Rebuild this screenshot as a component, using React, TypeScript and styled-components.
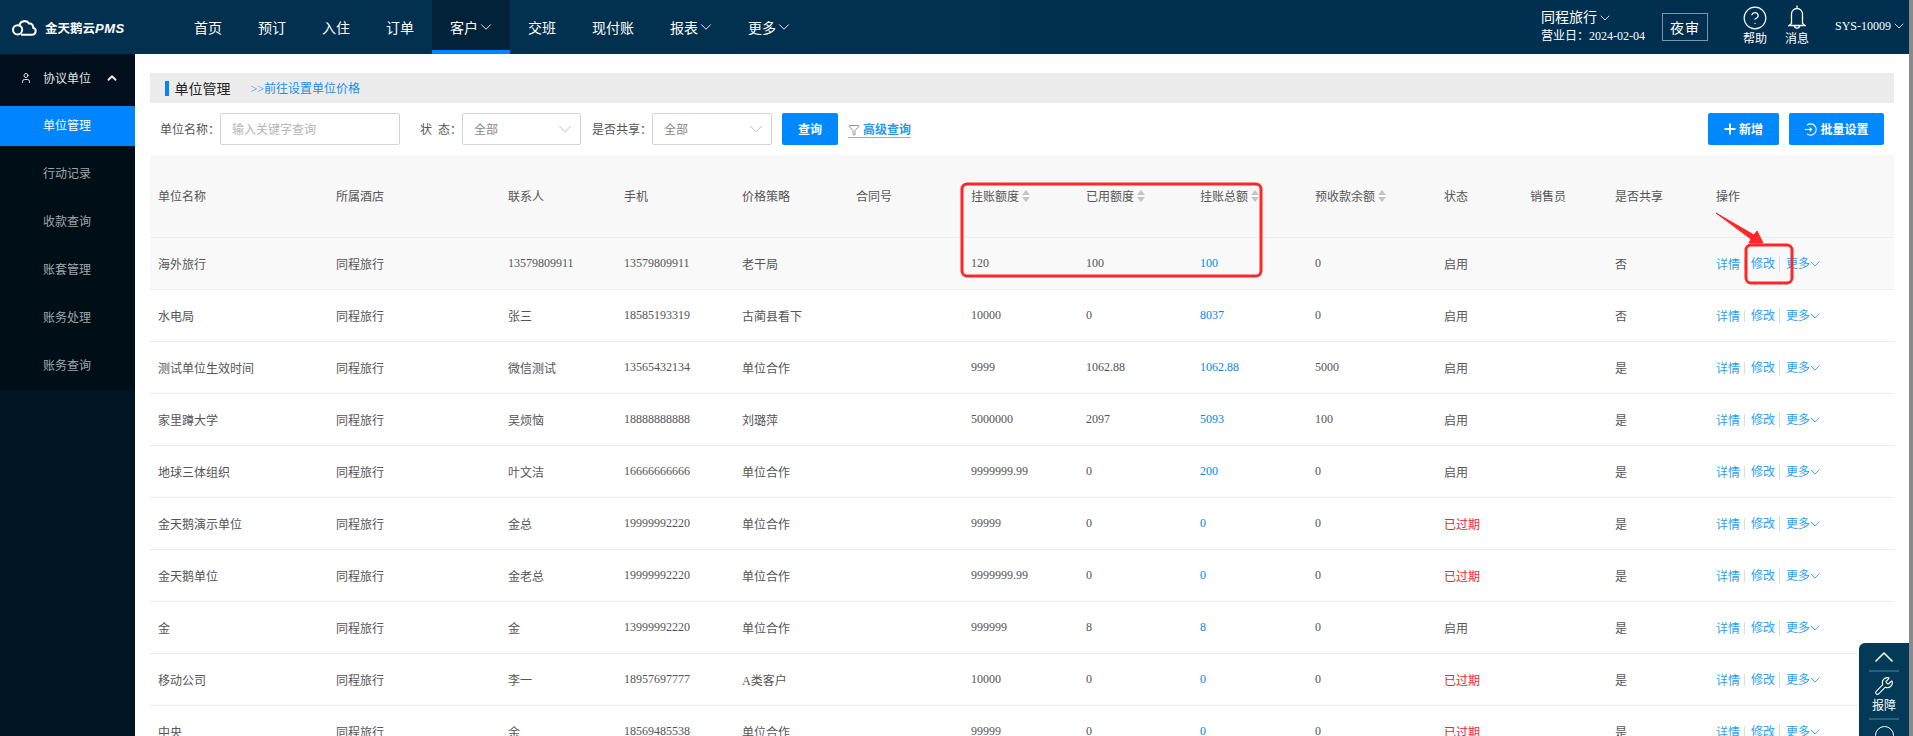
import * as React from 'react';
import styled, { createGlobalStyle } from 'styled-components';
import { ChevronDown, ChevronUp, User, Plus, Wrench, CircleHelp, Filter } from 'lucide-react';

const GlobalStyle = createGlobalStyle`
    html, body {
        margin: 0;
        height: 100%;
        overflow: hidden;
        background: #fff;
    }
    body, input, button {
        font-family: "Liberation Serif", "Noto Sans CJK SC", serif;
    }
`;

const Page = styled.div`
    position: relative;
    width: 1913px;
    height: 736px;
    overflow: hidden;
    display: flex;
    flex-direction: column;
    padding-right: 4px;
    box-sizing: border-box;
    &::after {
        content: '';
        position: absolute;
        top: 0;
        right: 0;
        bottom: 0;
        width: 4px;
        background: #8a8a8a;
    }
`;

const Header = styled.header`
    flex: none;
    height: 54px;
    display: flex;
    align-items: stretch;
    background: linear-gradient(90deg, #03304f 0%, #002f4f 100%);
    color: #fff;
`;

const Logo = styled.div`
    width: 176px;
    flex: none;
    display: flex;
    align-items: center;
    padding-left: 12px;
    box-sizing: border-box;
    gap: 8px;
    font-size: 12.5px;
    font-family: "Noto Sans CJK SC", sans-serif;
    font-weight: 700;
    svg {
        width: 25px;
        height: 17px;
    }
    em {
        font-family: "Liberation Sans", sans-serif;
        font-size: 13px;
        letter-spacing: 0.5px;
    }
`;

const NavItem = styled.div<{ $active?: boolean }>`
    display: flex;
    align-items: center;
    padding: 0 18px;
    font-size: 14px;
    box-sizing: border-box;
    background: ${p => (p.$active ? '#012238' : 'transparent')};
    border-bottom: 4px solid ${p => (p.$active ? '#0084ff' : 'transparent')};
    border-top: 4px solid transparent;
    svg {
        width: 18px;
        height: 18px;
        margin: 0 -3px 0 -1px;
        stroke-width: 1.2;
    }
`;

const Tools = styled.div`
    margin-left: auto;
    display: flex;
    align-items: center;
`;

const Shop = styled.div`
    width: 121px;
    font-size: 12px;
    line-height: 19px;
    div:first-child {
        font-size: 14px;
        display: flex;
        align-items: center;
    }
    svg {
        width: 16px;
        height: 16px;
        stroke-width: 1.2;
    }
`;

const Audit = styled.div`
    width: 46px;
    height: 28px;
    box-sizing: border-box;
    border: 1px solid #7c97a8;
    display: flex;
    align-items: center;
    justify-content: center;
    font-size: 14px;
    margin-right: 35px;
    letter-spacing: 1px;
`;

const IconLink = styled.div<{ $gap: number }>`
    width: 24px;
    height: 54px;
    margin-right: ${p => p.$gap}px;
    font-size: 12px;
    display: flex;
    flex-direction: column;
    align-items: center;
    padding-top: 5px;
    box-sizing: border-box;
    white-space: nowrap;
    line-height: 14px;
`;

const HelpIcon = styled(CircleHelp)`
    width: 26px;
    height: 26px;
    flex: none;
    stroke-width: 1.1;
    margin-bottom: 1px;
`;

const BellIcon = styled.svg`
    width: 18px;
    height: 24px;
    flex: none;
    margin-bottom: 3px;
`;

const UserName = styled.div`
    display: flex;
    align-items: center;
    font-size: 12px;
    padding: 0 2px 2px 0;
    svg {
        width: 16px;
        height: 16px;
        stroke-width: 1.2;
    }
`;

const Body = styled.div`
    flex: 1;
    display: flex;
    min-height: 0;
`;

const Sidebar = styled.aside`
    width: 135px;
    flex: none;
    background: #001423;
    font-size: 12px;
`;

const SideMenu = styled.nav`
    height: 336px;
    background: #000e17;
`;

const SideGroup = styled.div`
    height: 48px;
    margin-bottom: 4px;
    box-sizing: border-box;
    background: #010f1c;
    display: flex;
    align-items: center;
    padding: 0 16px 0 20px;
    color: #e2e5e7;
`;

const GroupIcon = styled(User)`
    width: 12px;
    height: 12px;
    margin-right: 11px;
`;

const GroupChevron = styled(ChevronUp)`
    width: 14px;
    height: 14px;
    margin-left: auto;
    stroke-width: 3.5;
`;

const SideItem = styled.div<{ $active?: boolean }>`
    height: 40px;
    margin-bottom: 8px;
    padding-left: 43px;
    line-height: 40px;
    background: ${p => (p.$active ? '#0084ff' : 'transparent')};
    color: ${p => (p.$active ? '#fff' : '#a0a6aa')};
`;

const Main = styled.main`
    flex: 1;
    min-width: 0;
    padding: 19px 15px 0 15px;
    display: flex;
    flex-direction: column;
`;

const TitleBar = styled.div`
    flex: none;
    height: 30px;
    background: #ececec;
    display: flex;
    align-items: center;
    padding-left: 15px;
    &::before {
        content: '';
        width: 4px;
        height: 15px;
        background: #0084ff;
        margin-right: 5.5px;
    }
`;

const Title = styled.span`
    font-size: 14px;
    color: #222;
    margin-right: 20px;
`;

const TitleLink = styled.a`
    font-size: 12px;
    color: #1a8cf0;
`;

const Filters = styled.div`
    flex: none;
    height: 52px;
    display: flex;
    align-items: center;
    padding-left: 10px;
    padding-right: 10px;
    font-size: 12px;
    color: #555;
`;

const FieldLabel = styled.span<{ $width: number }>`
    width: ${p => p.$width}px;
    flex: none;
`;

const TextBox = styled.div<{ $width: number; $gap: number }>`
    width: ${p => p.$width}px;
    margin-right: ${p => p.$gap}px;
    height: 32px;
    box-sizing: border-box;
    flex: none;
    border: 1px solid #d4d4d4;
    border-radius: 2px;
    display: flex;
    align-items: center;
    justify-content: space-between;
    padding: 0 4px 0 11px;
    color: #888;
    svg {
        width: 22px;
        height: 22px;
        stroke-width: 1;
        color: #bbb;
    }
`;

const Placeholder = styled.span`
    color: #b5b5b5;
`;

const Button = styled.button<{ $width: number }>`
    width: ${p => p.$width}px;
    height: 32px;
    flex: none;
    border: 0;
    border-radius: 2px;
    background: #0088ff;
    color: #fff;
    font-size: 12px;
    font-weight: 700;
    display: flex;
    align-items: center;
    justify-content: center;
    padding: 0;
`;

const PlusIcon = styled(Plus)`
    width: 16px;
    height: 16px;
    margin: 0 1px 0 -2px;
    stroke-width: 3;
`;

const BatchIcon = styled.svg`
    width: 13px;
    height: 13px;
    margin-right: 3px;
`;

const Advanced = styled.a`
    margin-left: 10px;
    padding-top: 2px;
    display: flex;
    align-items: center;
    gap: 3px;
    color: #2a9ae8;
    font-weight: 700;
    border-bottom: 1px solid #aaa;
    line-height: 14px;
    svg {
        width: 12px;
        height: 12px;
        color: #666;
        stroke-width: 1.4;
    }
`;

const Actions = styled.div`
    margin-left: auto;
    display: flex;
    gap: 10px;
`;

const Table = styled.div`
    flex: none;
    font-size: 12px;
    color: #555;
`;

const Row = styled.div<{ $head?: boolean; $hover?: boolean }>`
    display: grid;
    grid-template-columns: 178px 172px 116px 118px 114px 115px 115px 114px 115px 129px 86px 85px 101px 1fr;
    align-items: center;
    height: ${p => (p.$head ? 83 : 52)}px;
    box-sizing: border-box;
    border-bottom: 1px solid #ececec;
    background: ${p => (p.$head ? '#f8f8f8' : p.$hover ? '#f9f9f9' : '#fff')};
`;

const Cell = styled.div<{ $tone?: 'link' | 'danger' }>`
    padding-left: 8px;
    white-space: nowrap;
    color: ${p => (p.$tone === 'link' ? '#0a84e8' : p.$tone === 'danger' ? '#f5222d' : 'inherit')};
    display: flex;
    align-items: center;
`;

const SortMark = styled.i`
    display: inline-flex;
    flex-direction: column;
    gap: 2px;
    margin-left: 3px;
    &::before, &::after {
        content: '';
        border-left: 4px solid transparent;
        border-right: 4px solid transparent;
    }
    &::before {
        border-bottom: 5px solid #c4c4c4;
    }
    &::after {
        border-top: 5px solid #c4c4c4;
    }
`;

const OpLink = styled.a`
    color: #2b9ff0;
    display: inline-flex;
    align-items: center;
    svg {
        width: 16px;
        height: 16px;
        margin: 0 -3px 0 -3px;
        stroke-width: 1.3;
    }
    & + & {
        margin-left: 4px;
        padding-left: 6px;
        border-left: 1px solid #ddd;
        line-height: 12px;
    }
`;

const Callouts = styled.svg`
    position: absolute;
    left: 0;
    top: 0;
    width: 1913px;
    height: 736px;
    pointer-events: none;
`;

const FloatPanel = styled.div`
    position: absolute;
    left: 1859px;
    top: 643px;
    width: 50px;
    height: 93px;
    overflow: hidden;
    background: #033a57;
    border-top-left-radius: 6px;
    color: #fff;
    font-size: 12px;
    display: flex;
    flex-direction: column;
    align-items: center;
`;

const PanelUp = styled(ChevronUp)`
    flex: none;
    width: 32px;
    height: 32px;
    margin: -2px 0 -3px;
    stroke-width: 1.2;
`;

const PanelRule = styled.div`
    flex: none;
    width: 30px;
    height: 2px;
    background: #2d5d79;
`;

const PanelWrench = styled(Wrench)`
    flex: none;
    width: 20px;
    height: 20px;
    margin-top: 4px;
    stroke-width: 1.3;
`;

const PanelLabel = styled.div`
    line-height: 18px;
    margin: 1px 0 3px;
`;

const PanelRing = styled.div`
    flex: none;
    width: 17px;
    height: 17px;
    border: 1.5px solid #fff;
    border-radius: 50%;
    margin-top: 6px;
`;

type Unit = [string, string, string, string, string, string, string, string];

const units: Unit[] = [
    ['海外旅行', '13579809911', '13579809911', '老干局', '120', '100', '100', '0'],
    ['水电局', '张三', '18585193319', '古蔺县看下', '10000', '0', '8037', '0'],
    ['测试单位生效时间', '微信测试', '13565432134', '单位合作', '9999', '1062.88', '1062.88', '5000'],
    ['家里蹲大学', '吴烦恼', '18888888888', '刘璐萍', '5000000', '2097', '5093', '100'],
    ['地球三体组织', '叶文洁', '16666666666', '单位合作', '9999999.99', '0', '200', '0'],
    ['金天鹅演示单位', '金总', '19999992220', '单位合作', '99999', '0', '0', '0'],
    ['金天鹅单位', '金老总', '19999992220', '单位合作', '9999999.99', '0', '0', '0'],
    ['金', '金', '13999992220', '单位合作', '999999', '8', '8', '0'],
    ['移动公司', '李一', '18957697777', 'A类客户', '10000', '0', '0', '0'],
    ['中央', '余', '18569485538', '单位合作', '99999', '0', '0', '0'],
];
const statuses = ['启用', '启用', '启用', '启用', '启用', '已过期', '已过期', '启用', '已过期', '已过期'];
const shared = ['否', '否', '是', '是', '是', '是', '是', '是', '是', '是'];

const navItems: [string, boolean][] = [
    ['首页', false], ['预订', false], ['入住', false], ['订单', false], ['客户', true],
    ['交班', false], ['现付账', false], ['报表', true], ['更多', true],
];

const headers: [string, boolean][] = [
    ['单位名称', false], ['所属酒店', false], ['联系人', false], ['手机', false], ['价格策略', false],
    ['合同号', false], ['挂账额度', true], ['已用额度', true], ['挂账总额', true], ['预收款余额', true],
    ['状态', false], ['销售员', false], ['是否共享', false], ['操作', false],
];

function CloudLogo() {
    return (
        <svg viewBox="0 0 25 17" fill="none" stroke="#fff" strokeWidth="2">
            <circle cx="5.6" cy="10.8" r="4.6" />
            <path d="M7.4 6.4A5.4 5.4 0 0 1 17.2 4.6 3.6 3.6 0 0 1 21.2 8.8 3.6 3.6 0 0 1 20 15.8H9" />
        </svg>
    );
}

export default function App() {
    return (
        <Page>
            <GlobalStyle />
            <Header>
                <Logo>
                    <CloudLogo />
                    <span>金天鹅云<em>PMS</em></span>
                </Logo>
                {navItems.map(([name, menu]) => (
                    <NavItem key={name} $active={name === '客户'}>
                        {name}
                        {menu && <ChevronDown />}
                    </NavItem>
                ))}
                <Tools>
                    <Shop>
                        <div>同程旅行<ChevronDown /></div>
                        <div>营业日：2024-02-04</div>
                    </Shop>
                    <Audit>夜审</Audit>
                    <IconLink $gap={18}><HelpIcon />帮助</IconLink>
                    <IconLink $gap={26}>
                        <BellIcon viewBox="0 0 18 24" fill="none" stroke="#fff" strokeWidth="1.3">
                            <path d="M9 .5v2.6M3.5 18.5V9a5.5 5.5 0 0 1 11 0v9.5l2.5 2H1l2.5-2ZM6.4 20.5a2.6 2.6 0 0 0 5.2 0" />
                        </BellIcon>
                        消息
                    </IconLink>
                    <UserName>SYS-10009<ChevronDown /></UserName>
                </Tools>
            </Header>
            <Body>
                <Sidebar>
                    <SideMenu>
                        <SideGroup><GroupIcon />协议单位<GroupChevron /></SideGroup>
                        <SideItem $active>单位管理</SideItem>
                        <SideItem>行动记录</SideItem>
                        <SideItem>收款查询</SideItem>
                        <SideItem>账套管理</SideItem>
                        <SideItem>账务处理</SideItem>
                        <SideItem>账务查询</SideItem>
                    </SideMenu>
                </Sidebar>
                <Main>
                    <TitleBar>
                        <Title>单位管理</Title>
                        <TitleLink>&gt;&gt;前往设置单位价格</TitleLink>
                    </TitleBar>
                    <Filters>
                        <FieldLabel $width={60}>单位名称：</FieldLabel>
                        <TextBox $width={180} $gap={20}><Placeholder>输入关键字查询</Placeholder></TextBox>
                        <FieldLabel $width={42}>状&nbsp;&nbsp;态：</FieldLabel>
                        <TextBox $width={119} $gap={11}>全部<ChevronDown /></TextBox>
                        <FieldLabel $width={60}>是否共享：</FieldLabel>
                        <TextBox $width={120} $gap={10}>全部<ChevronDown /></TextBox>
                        <Button $width={56}>查询</Button>
                        <Advanced><Filter />高级查询</Advanced>
                        <Actions>
                            <Button $width={71}><PlusIcon />新增</Button>
                            <Button $width={95}>
                                <BatchIcon viewBox="0 0 13 13" fill="none" stroke="#fff" strokeWidth="1.1">
                                    <path d="M3 2.2a5.6 5.6 0 1 1 0 8.6M1 6.5h6.5M5.6 4.6l2 1.9-2 1.9" />
                                </BatchIcon>
                                批量设置
                            </Button>
                        </Actions>
                    </Filters>
                    <Table>
                        <Row $head>
                            {headers.map(([name, sortable]) => (
                                <Cell key={name}>{name}{sortable && <SortMark />}</Cell>
                            ))}
                        </Row>
                        {units.map((u, i) => (
                            <Row key={u[0]} $hover={i === 0}>
                                <Cell>{u[0]}</Cell>
                                <Cell>同程旅行</Cell>
                                <Cell>{u[1]}</Cell>
                                <Cell>{u[2]}</Cell>
                                <Cell>{u[3]}</Cell>
                                <Cell />
                                <Cell>{u[4]}</Cell>
                                <Cell>{u[5]}</Cell>
                                <Cell $tone="link">{u[6]}</Cell>
                                <Cell>{u[7]}</Cell>
                                <Cell $tone={statuses[i] === '已过期' ? 'danger' : undefined}>{statuses[i]}</Cell>
                                <Cell />
                                <Cell>{shared[i]}</Cell>
                                <Cell>
                                    <OpLink>详情</OpLink>
                                    <OpLink>修改</OpLink>
                                    <OpLink>更多<ChevronDown /></OpLink>
                                </Cell>
                            </Row>
                        ))}
                    </Table>
                </Main>
            </Body>
            <Callouts viewBox="0 0 1913 736" fill="none" stroke="#ff2626">
                <rect x="962" y="184" width="299" height="92" rx="5" strokeWidth="3" />
                <rect x="1746" y="245" width="46" height="38" rx="5" strokeWidth="3" />
                <path d="M1716 213 L1754 235 L1757 231 L1763 243 L1749 243 L1751 239 Z" fill="#ff2626" strokeWidth="1" />
            </Callouts>
            <FloatPanel>
                <PanelUp />
                <PanelRule />
                <PanelWrench />
                <PanelLabel>报障</PanelLabel>
                <PanelRule />
                <PanelRing />
            </FloatPanel>
        </Page>
    );
}
